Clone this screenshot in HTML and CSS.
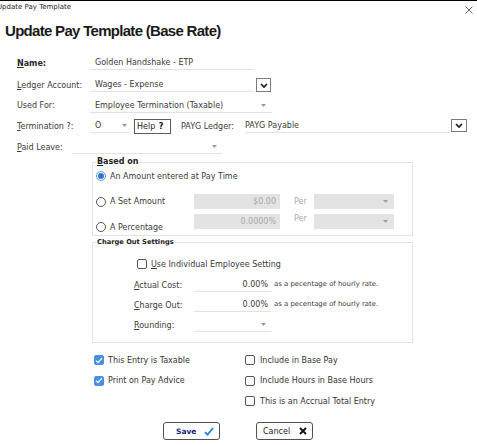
FILE: index.html
```html
<!DOCTYPE html>
<html>
<head>
<meta charset="utf-8">
<link rel="stylesheet" href="styles.css">
</head>
<body>
<div class="window">
  <div class="titlebar">
    <span class="title">Update Pay Template</span>
    <svg class="close" width="8" height="8" viewBox="0 0 8 8"><path d="M0.5 0.5L7.5 7.5M7.5 0.5L0.5 7.5" stroke="#6a6a6a" stroke-width="1"/></svg>
  </div>
  <h1 class="heading">Update Pay Template (Base Rate)</h1>

  <div class="form">
    <div class="row r-name">
      <span class="lbl bold"><u>N</u>ame:</span>
      <div class="field w164">Golden Handshake - ETP</div>
    </div>
    <div class="row r-ledger">
      <span class="lbl"><u>L</u>edger Account:</span>
      <div class="field w164">Wages - Expense</div>
      <span class="ddbtn"><svg width="8" height="5" viewBox="0 0 8 5"><path d="M1 1L4 4L7 1" fill="none" stroke="#1a1a1a" stroke-width="1.7"/></svg></span>
    </div>
    <div class="row r-used">
      <span class="lbl">Used For:</span>
      <div class="field select w182">Employee Termination (Taxable)<svg class="arr" width="5" height="3" viewBox="0 0 5 3"><polygon points="0,0 5,0 2.5,3" fill="#9a9a9a"/></svg></div>
    </div>
    <div class="row r-term">
      <span class="lbl"><u>T</u>ermination ?:</span>
      <div class="field select w40">O<svg class="arr" width="5" height="3" viewBox="0 0 5 3"><polygon points="0,0 5,0 2.5,3" fill="#9a9a9a"/></svg></div>
      <span class="help">Help <b>?</b></span>
      <span class="lbl2">PAYG Ledger:</span>
      <div class="field w205 nopad">PAYG Payable</div>
      <span class="ddbtn"><svg width="8" height="5" viewBox="0 0 8 5"><path d="M1 1L4 4L7 1" fill="none" stroke="#1a1a1a" stroke-width="1.7"/></svg></span>
    </div>
    <div class="row r-paid">
      <span class="lbl short"><u>P</u>aid Leave:</span>
      <div class="field select w150"><span></span><svg class="arr" width="5" height="3" viewBox="0 0 5 3"><polygon points="0,0 5,0 2.5,3" fill="#9a9a9a"/></svg></div>
    </div>
  </div>

  <fieldset class="group based">
    <legend class="legend"><u>B</u>ased on</legend>
    <div class="opt-row o1">
      <span class="radio-lbl"><span class="radio on"></span>An Amount entered at Pay Time</span>
    </div>
    <div class="opt-row o2">
      <span class="radio-lbl"><span class="radio"></span>A Set Amount</span>
      <span class="dis-input">$0.00</span>
      <span class="per">Per</span>
      <span class="dis-select"><svg width="5" height="3" viewBox="0 0 5 3"><polygon points="0,0 5,0 2.5,3" fill="#a0a0a0"/></svg></span>
    </div>
    <div class="opt-row o3">
      <span class="radio-lbl low"><span class="radio"></span>A Percentage</span>
      <span class="dis-input">0.0000%</span>
      <span class="per">Per</span>
      <span class="dis-select"><svg width="5" height="3" viewBox="0 0 5 3"><polygon points="0,0 5,0 2.5,3" fill="#a0a0a0"/></svg></span>
    </div>
  </fieldset>

  <fieldset class="group charge">
    <legend class="legend small">Charge Out Settings</legend>
    <div class="cb-row">
      <span class="check"></span><span><u>U</u>se Individual Employee Setting</span>
    </div>
    <div class="co-row first">
      <span class="co-lbl"><u>A</u>ctual Cost:</span>
      <span class="co-input">0.00%</span>
      <span class="hint">as a pecentage of hourly rate.</span>
    </div>
    <div class="co-row">
      <span class="co-lbl"><u>C</u>harge Out:</span>
      <span class="co-input">0.00%</span>
      <span class="hint">as a pecentage of hourly rate.</span>
    </div>
    <div class="co-row">
      <span class="co-lbl"><u>R</u>ounding:</span>
      <span class="co-input sel"><svg width="5" height="3" viewBox="0 0 5 3"><polygon points="0,0 5,0 2.5,3" fill="#9a9a9a"/></svg></span>
    </div>
  </fieldset>

  <div class="flags">
    <div class="flag"><span class="check on"><svg width="8" height="7" viewBox="0 0 8 7"><path d="M1 3.6L3 5.6L7 1.2" fill="none" stroke="#fff" stroke-width="1.2"/></svg></span>This Entry is Taxable</div>
    <div class="flag right"><span class="check"></span>Include in Base Pay</div>
    <div class="flag"><span class="check on"><svg width="8" height="7" viewBox="0 0 8 7"><path d="M1 3.6L3 5.6L7 1.2" fill="none" stroke="#fff" stroke-width="1.2"/></svg></span>Print on Pay Advice</div>
    <div class="flag right"><span class="check"></span>Include Hours in Base Hours</div>
    <div class="flag empty"></div>
    <div class="flag right"><span class="check"></span>This is an Accrual Total Entry</div>
  </div>

  <div class="buttons">
    <span class="btn save"><span class="save-txt">Save</span><svg width="10" height="9" viewBox="0 0 10 9"><path d="M1 5.2L3.6 7.6L9 1" fill="none" stroke="#2f86d6" stroke-width="1.9"/></svg></span>
    <span class="btn cancel"><span>Cancel</span><svg width="8" height="8" viewBox="0 0 8 8"><path d="M1 1L7 7M7 1L1 7" stroke="#111" stroke-width="1.9"/></svg></span>
  </div>
</div>
</body>
</html>
```

FILE: styles.css
```css
* { box-sizing: border-box; }
html, body { margin: 0; padding: 0; background: #fff; }
body {
  width: 477px;
  height: 445px;
  overflow: hidden;
  font-family: "DejaVu Sans", Verdana, sans-serif;
  font-size: 8px;
  color: #3a3a3a;
}
u { text-decoration: underline; text-underline-offset: 1px; }

.window { width: 477px; height: 445px; }

/* title bar */
.titlebar {
  height: 14px;
  border-top: 1px solid #000;
  display: flex;
  justify-content: space-between;
  align-items: flex-start;
  padding-right: 4px;
}
.title {
  margin-left: -3px;
  font-size: 7px;
  line-height: 12px;
  color: #222;
}
.close { margin-top: 5px; }

.heading {
  margin: 6px 0 0 5px;
  font-family: "Liberation Sans", Arial, sans-serif;
  font-size: 15px;
  font-weight: bold;
  letter-spacing: -0.7px;
  line-height: 22px;
  height: 22px;
  color: #1a1a1a;
}

/* form rows */
.form { margin-top: 10px; }
.row {
  display: flex;
  align-items: center;
  padding-left: 17px;
}
.r-name, .r-ledger, .r-term { height: 22px; }
.r-used { height: 19px; }
.r-paid { height: 20px; }

.lbl { width: 73px; white-space: nowrap; }
.lbl.short { width: 55px; }
.bold { font-weight: bold; color: #2a2a2a; }
.lbl2 { width: 64px; margin-left: 10px; white-space: nowrap; }

.field {
  height: 14px;
  border-bottom: 1px solid #e2e2e2;
  display: flex;
  align-items: center;
  padding-left: 5px;
  white-space: nowrap;
}
.field.nopad { padding-left: 0; }
.field.select { justify-content: space-between; padding-right: 6px; }
.w164 { width: 164px; }
.w182 { width: 182px; }
.w40 { width: 40px; padding-right: 3px !important; }
.w150 { width: 150px; padding-right: 5px !important; }
.w205 { width: 205px; }
.arr { flex: none; }

.ddbtn {
  width: 15px;
  height: 14px;
  margin-left: 2px;
  border: 1px solid #7c7c7c;
  display: flex;
  align-items: center;
  justify-content: center;
  background: #fff;
}
.r-term .ddbtn { margin-left: 1px; width: 16px; height: 13px; margin-top: -2px; }

.help {
  margin-left: 4px;
  width: 37px;
  height: 15px;
  border: 1px solid #5a5a5a;
  display: flex;
  align-items: center;
  padding-left: 2px;
  color: #222;
  white-space: pre;
}
.help b { margin-left: 1px; font-weight: bold; color: #111; }

/* groups */
.group {
  margin: 0 0 0 92px;
  width: 321px;
  padding: 0;
  border: 1px solid #e3e3e3;
  min-width: 0;
}
.legend {
  margin-left: 3px;
  padding: 0 1px;
  font-weight: bold;
  font-size: 8px;
  line-height: 10px;
  color: #222;
}
.legend.small { font-size: 6.7px; }

.based { padding-bottom: 3px; }
.opt-row {
  display: flex;
  align-items: center;
  padding-left: 3px;
}
.o1 { height: 18px; }
.o2 { height: 15px; margin-top: 9px; }
.o3 { height: 18px; margin-top: 5px; align-items: flex-start; }
.radio-lbl {
  width: 98px;
  display: flex;
  align-items: center;
  gap: 4px;
  white-space: nowrap;
}
.radio-lbl.low { align-self: flex-end; height: 10px; }
.radio {
  width: 10px;
  height: 10px;
  border: 1px solid #555;
  border-radius: 50%;
  flex: none;
  display: flex;
  align-items: center;
  justify-content: center;
  background: #fff;
}
.radio.on { border-color: #5d9ae0; }
.radio.on::after {
  content: "";
  width: 6px;
  height: 6px;
  border-radius: 50%;
  background: #2f78d4;
}
.dis-input {
  width: 86px;
  height: 15px;
  background: #e3e3e3;
  color: #a8a8a8;
  display: flex;
  align-items: center;
  justify-content: flex-end;
  padding-right: 4px;
}
.per {
  margin-left: 14px;
  width: 20px;
  color: #acacac;
}
.dis-select {
  width: 80px;
  height: 15px;
  background: #e3e3e3;
  display: flex;
  align-items: center;
  justify-content: flex-end;
  padding-right: 6px;
}

.charge { margin-top: 1px; padding-bottom: 10px; }
.cb-row {
  height: 18px;
  margin-top: 8px;
  padding-left: 44px;
  display: flex;
  align-items: center;
  gap: 4px;
  white-space: nowrap;
}
.check {
  width: 10px;
  height: 10px;
  border: 1px solid #555;
  border-radius: 2px;
  flex: none;
  display: flex;
  align-items: center;
  justify-content: center;
  background: #fff;
}
.check.on { background: #4b8fe4; border-color: #4b8fe4; }
.co-row {
  height: 14px;
  margin-top: 6px;
  padding-left: 41px;
  display: flex;
  align-items: center;
  white-space: nowrap;
}
.co-row.first { margin-top: 5px; }
.co-lbl { width: 60px; }
.co-input {
  width: 77px;
  height: 14px;
  border-bottom: 1px solid #e2e2e2;
  display: flex;
  align-items: center;
  justify-content: flex-end;
  padding-right: 3px;
}
.co-input.sel { padding-right: 5px; }
.hint {
  margin-left: 3px;
  font-size: 6.9px;
  color: #3a3a3a;
  margin-top: -2px;
}

/* flags */
.flags {
  margin: 7px 0 0 94px;
  display: grid;
  grid-template-columns: 151px auto;
  grid-template-rows: 20px 21px 20px;
}
.flag {
  display: flex;
  align-items: center;
  gap: 4px;
  white-space: nowrap;
  color: #333;
}
.flag.right { gap: 5px; }

/* buttons */
.buttons {
  margin-top: 11px;
  padding-left: 163px;
  display: flex;
  gap: 36px;
}
.btn {
  width: 57px;
  height: 18px;
  border: 1px solid #505050;
  border-radius: 3px;
  background: #fff;
  display: flex;
  align-items: center;
  justify-content: space-between;
  padding: 0 5px 0 12px;
}
.save-txt {
  font-weight: bold;
  font-size: 7.5px;
  color: #16287c;
}
.cancel { padding-left: 6px; color: #222; }
```
